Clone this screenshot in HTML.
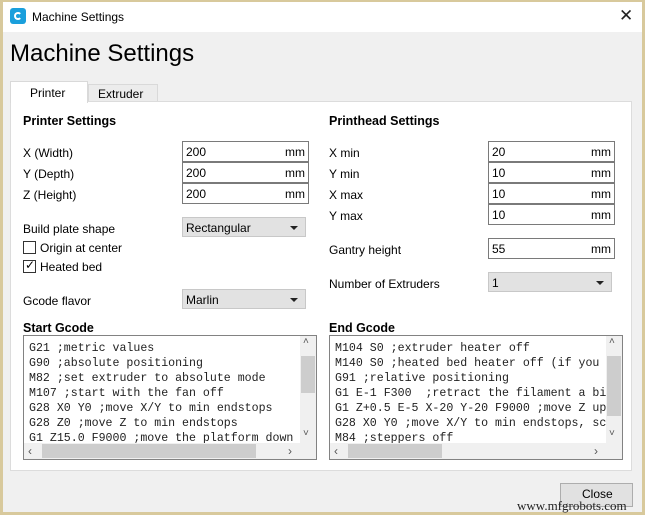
<!DOCTYPE html>
<html><head><style>
*{box-sizing:border-box;margin:0;padding:0}
body{width:645px;height:515px;overflow:hidden;background:#d8c99c;font-family:"Liberation Sans",sans-serif;font-size:12px;color:#000;position:relative}
.win{position:absolute;left:3px;top:2px;width:639px;height:510px;background:#f0f0f0}
.title{position:absolute;left:0;top:0;width:639px;height:30px;background:#fff}
.abs{position:absolute}
.pane{position:absolute;left:7px;top:99px;width:622px;height:370px;background:#fff;border:1px solid #dcdcdc}
.lbl{position:absolute;font-size:12px;white-space:nowrap}
.h{font-weight:bold;font-size:12.5px}
.inp{position:absolute;width:127px;height:21px;border:1px solid #7a7a7a;background:#fff;font-size:12px;padding:3px 3px}
.inp span{position:absolute;right:3px;top:3px}
.cmb{position:absolute;width:124px;height:20px;border:1px solid #c8c8c8;background:#e2e2e2;padding:3px 3px;font-size:12px}
.cmb:after{content:"";position:absolute;right:7px;top:8px;border-left:4px solid transparent;border-right:4px solid transparent;border-top:4px solid #222}
.code{position:absolute;width:294px;height:125px;border:1px solid #828282;background:#fff;overflow:hidden}
.code pre{position:absolute;left:5px;top:5px;font-family:"Liberation Mono",monospace;font-size:11.6px;line-height:15px;color:#222}
.vs{position:absolute;right:0;top:0;width:16px;height:107px;background:#f0f0f0}
.hs{position:absolute;left:0;bottom:0;height:16px;background:#f0f0f0}
.thumb{position:absolute;background:#cdcdcd}
.cb{position:absolute;width:13px;height:13px;border:1px solid #333;background:#fff}
</style></head><body>
<div class="win">
 <div class="title">
  <div class="abs" style="left:7px;top:6px;width:16px;height:16px;background:#1a9fdc;border-radius:3px"></div>
  <div class="abs" style="left:11px;top:10px;width:8px;height:8px;border:2px solid #fff;border-right-color:transparent;border-radius:50%"></div>
  <div class="lbl" style="left:29px;top:8px;font-size:12px">Machine Settings</div>
  <div class="lbl" style="left:616px;top:4px;font-size:17px;color:#222">✕</div>
 </div>
 <div class="lbl" style="left:7px;top:38px;font-size:24px">Machine Settings</div>
 <div class="abs" style="left:85px;top:82px;width:70px;height:18px;background:#ececec;border:1px solid #d9d9d9;border-bottom:none"></div>
 <div class="lbl" style="left:95px;top:85px">Extruder</div>
 <div class="pane"></div>
 <div class="abs" style="left:7px;top:79px;width:78px;height:22px;background:#fff;border:1px solid #d9d9d9;border-bottom:none"></div>
 <div class="lbl" style="left:27px;top:84px">Printer</div>

 <div class="lbl h" style="left:20px;top:112px">Printer Settings</div>
 <div class="lbl" style="left:20px;top:144px">X (Width)</div>
 <div class="lbl" style="left:20px;top:165px">Y (Depth)</div>
 <div class="lbl" style="left:20px;top:186px">Z (Height)</div>
 <div class="inp" style="left:179px;top:139px">200<span>mm</span></div>
 <div class="inp" style="left:179px;top:160px">200<span>mm</span></div>
 <div class="inp" style="left:179px;top:181px">200<span>mm</span></div>
 <div class="lbl" style="left:20px;top:220px">Build plate shape</div>
 <div class="cmb" style="left:179px;top:215px">Rectangular</div>
 <div class="cb" style="left:20px;top:239px"></div>
 <div class="lbl" style="left:37px;top:239px">Origin at center</div>
 <div class="cb" style="left:20px;top:258px"></div>
 <div class="lbl" style="left:22px;top:256px;font-size:12px">✓</div>
 <div class="lbl" style="left:37px;top:258px">Heated bed</div>
 <div class="lbl" style="left:20px;top:292px">Gcode flavor</div>
 <div class="cmb" style="left:179px;top:287px">Marlin</div>

 <div class="lbl h" style="left:326px;top:112px">Printhead Settings</div>
 <div class="lbl" style="left:326px;top:144px">X min</div>
 <div class="lbl" style="left:326px;top:165px">Y min</div>
 <div class="lbl" style="left:326px;top:186px">X max</div>
 <div class="lbl" style="left:326px;top:207px">Y max</div>
 <div class="inp" style="left:485px;top:139px">20<span>mm</span></div>
 <div class="inp" style="left:485px;top:160px">10<span>mm</span></div>
 <div class="inp" style="left:485px;top:181px">10<span>mm</span></div>
 <div class="inp" style="left:485px;top:202px">10<span>mm</span></div>
 <div class="lbl" style="left:326px;top:241px">Gantry height</div>
 <div class="inp" style="left:485px;top:236px">55<span>mm</span></div>
 <div class="lbl" style="left:326px;top:275px">Number of Extruders</div>
 <div class="cmb" style="left:485px;top:270px">1</div>

 <div class="lbl h" style="left:20px;top:319px">Start Gcode</div>
 <div class="code" style="left:20px;top:333px"><pre>G21 ;metric values
G90 ;absolute positioning
M82 ;set extruder to absolute mode
M107 ;start with the fan off
G28 X0 Y0 ;move X/Y to min endstops
G28 Z0 ;move Z to min endstops
G1 Z15.0 F9000 ;move the platform down</pre>
  <div class="vs"><div class="thumb" style="left:1px;top:20px;width:14px;height:37px"></div><div class="lbl" style="left:3px;top:0;font-size:10px;color:#555">˄</div><div class="lbl" style="left:3px;top:92px;font-size:10px;color:#555">˅</div></div>
  <div class="hs" style="width:292px"><div class="thumb" style="left:18px;top:1px;width:214px;height:14px"></div><div class="lbl" style="left:4px;top:1px;color:#555">‹</div><div class="lbl" style="left:264px;top:1px;color:#555">›</div></div>
 </div>
 <div class="lbl h" style="left:326px;top:319px">End Gcode</div>
 <div class="code" style="left:326px;top:333px"><pre>M104 S0 ;extruder heater off
M140 S0 ;heated bed heater off (if you
G91 ;relative positioning
G1 E-1 F300  ;retract the filament a bi
G1 Z+0.5 E-5 X-20 Y-20 F9000 ;move Z up
G28 X0 Y0 ;move X/Y to min endstops, sc
M84 ;steppers off</pre>
  <div class="vs"><div class="thumb" style="left:1px;top:20px;width:14px;height:60px"></div><div class="lbl" style="left:3px;top:0;font-size:10px;color:#555">˄</div><div class="lbl" style="left:3px;top:92px;font-size:10px;color:#555">˅</div></div>
  <div class="hs" style="width:292px"><div class="thumb" style="left:18px;top:1px;width:94px;height:14px"></div><div class="lbl" style="left:4px;top:1px;color:#555">‹</div><div class="lbl" style="left:264px;top:1px;color:#555">›</div></div>
 </div>

 <div class="abs" style="left:557px;top:481px;width:73px;height:24px;background:#e1e1e1;border:1px solid #adadad"></div>
 <div class="lbl" style="left:579px;top:485px">Close</div>
 <div class="lbl" style="left:514px;top:496px;font-family:'Liberation Serif',serif;font-size:13px;color:#222">www.mfgrobots.com</div>
</div>
</body></html>
